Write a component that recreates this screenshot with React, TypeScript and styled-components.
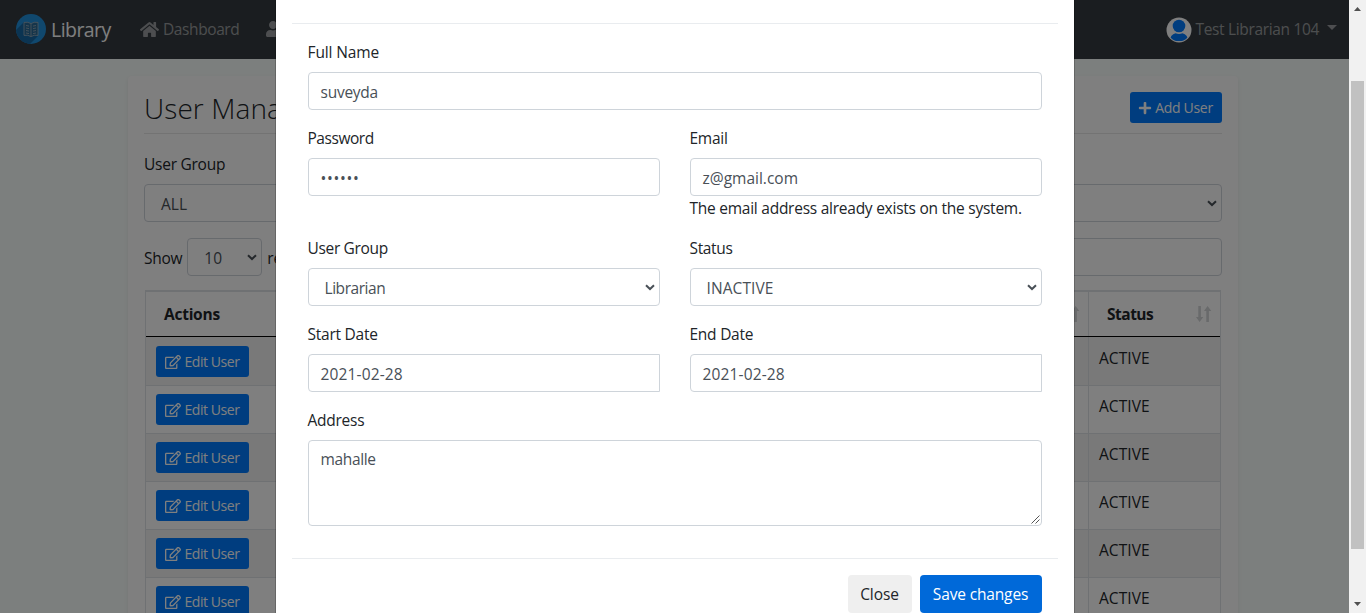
import React from "react";
import styled, { createGlobalStyle } from "styled-components";
import { FaHome, FaUser, FaPlus, FaRegEdit } from "react-icons/fa";

const GlobalStyle = createGlobalStyle`
  *, *::before, *::after { box-sizing: border-box; }
  html, body { margin: 0; height: 100%; overflow: hidden; }
  body {
    font-family: "Open Sans", "Noto Sans", sans-serif;
    font-size: 15.5px;
    font-weight: 400;
    line-height: 24px;
    color: #212529;
    background: #f9fefc;
  }
`;

const Window = styled.div`
  display: flex;
  height: 613px;
  width: 1366px;
  overflow: hidden;
`;

const Page = styled.div`
  flex: 1;
  min-width: 0;
  height: 613px;
  overflow: hidden;
  background: #f9fefc;
`;

const Text = styled.span<{ $track?: number }>`
  letter-spacing: ${(p) => p.$track ?? -0.25}px;
  white-space: nowrap;
`;

/* Navigation bar */

const Navbar = styled.nav`
  display: flex;
  align-items: center;
  height: 59px;
  padding: 0 12px 1px 16px;
  background: #343a40;
  color: rgba(255, 255, 255, 0.5);
`;

const Brand = styled.div`
  display: flex;
  align-items: center;
  width: 124px;
  color: #fff;
  font-size: 19.5px;

  svg { margin-right: 5px; }
  span { padding-top: 1px; }
`;

const NavItem = styled.div<{ $gap?: number; $width?: number }>`
  display: flex;
  align-items: center;
  gap: ${(p) => p.$gap ?? 4}px;
  width: ${(p) => (p.$width ? `${p.$width}px` : "auto")};

  span { margin-top: -1px; }
`;

const NavSpacer = styled.div`
  flex: 1;
`;

const Caret = styled.i`
  margin: -3px 0 0 4px;
  border-top: 5px solid currentColor;
  border-left: 5px solid transparent;
  border-right: 5px solid transparent;
`;

/* Card with the user list */

const Card = styled.section`
  width: 1110px;
  height: 700px;
  margin: 17px 0 0 128px;
  padding: 0 16px;
  border-radius: 4px;
  background: #fff;
  box-shadow: 0 2px 4px rgba(0, 0, 0, 0.075);
`;

const CardHeader = styled.header`
  display: flex;
  justify-content: space-between;
  height: 58px;
  padding-top: 16px;
  border-bottom: 1px solid #e6e6e6;
`;

const Title = styled.h3`
  margin: -1px 0 0;
  font-size: 28px;
  font-weight: 300;
  line-height: 34px;
  letter-spacing: 0.1px;
  white-space: nowrap;
`;

const SmallButton = styled.button<{ $width: number; $gap: number }>`
  display: flex;
  align-items: center;
  justify-content: center;
  gap: ${(p) => p.$gap}px;
  width: ${(p) => p.$width}px;
  height: 31px;
  padding: 0 1px 0 0;
  border: 0;
  border-radius: 3px;
  background: #007bff;
  color: #fff;
  font: inherit;
  font-size: 14px;
  line-height: 21px;
`;

const Filter = styled.div`
  padding-top: 18px;
`;

const Field = styled.div<{ $square?: boolean; $indent?: number; $width?: number }>`
  display: flex;
  flex-shrink: 0;
  align-items: center;
  justify-content: space-between;
  width: ${(p) => (p.$width ? `${p.$width}px` : "100%")};
  height: 38px;
  padding: 2px 4px 0 ${(p) => p.$indent ?? 12}px;
  border: 1px solid #ced4da;
  border-radius: ${(p) => (p.$square ? "4px 0 0 4px" : "4px")};
  background: #fff;
  color: #495057;
`;

const Label = styled.div`
  height: 24px;
  margin-bottom: 8px;
`;

const TableControls = styled.div`
  display: flex;
  align-items: center;
  gap: 5px;
  margin: 16px 0 14px;

  > span { padding-top: 1px; }
`;

const SearchSlot = styled.div`
  flex: 1;
  padding-left: 500px;
`;

const Table = styled.div`
  width: 1076px;
  margin-left: 1px;
  border: 1px solid #dee2e6;
  border-bottom: 0;
`;

const HeadRow = styled.div`
  display: grid;
  grid-template-columns: 190px 1fr 132px;
  height: 46px;
  border-top: 1px solid #dee2e6;
  border-bottom: 1px solid #000;
  font-weight: 700;
`;

const HeadCell = styled.div`
  display: flex;
  align-items: center;
  justify-content: space-between;
  padding: 0 7px 0 18px;
  border-left: 1px solid #dee2e6;
  &:first-child { border-left: 0; }
`;

const Cell = styled.div`
  padding: 8px 10px;
  border-left: 1px solid #dee2e6;
  &:first-child { border-left: 0; }
`;

const Row = styled.div<{ $first?: boolean; $striped?: boolean }>`
  display: grid;
  grid-template-columns: 190px 1fr 132px;
  height: ${(p) => (p.$first ? 49 : 48)}px;
  border-bottom: 1px solid #dee2e6;
  background: ${(p) => (p.$striped ? "#f2f2f2" : "#fff")};

  ${Cell} { padding-top: ${(p) => (p.$first ? 9 : 8)}px; }
`;

/* Modal */

const Backdrop = styled.div`
  position: fixed;
  top: 0;
  left: 0;
  width: 1349px;
  height: 613px;
  display: flex;
  justify-content: center;
  overflow: hidden;
  background: rgba(0, 0, 0, 0.5);
`;

const Dialog = styled.div`
  width: 800px;
  height: 660px;
  flex-shrink: 0;
  padding: 23px 16px 0;
  border: 1px solid rgba(0, 0, 0, 0.2);
  border-width: 0 1px;
  background: #fff;
  background-clip: padding-box;
`;

const DialogBody = styled.div`
  display: flex;
  flex-direction: column;
  gap: 16px;
  height: 536px;
  padding: 16px 16px 0;
  border-top: 1px solid #e9ecef;
  border-bottom: 1px solid #e9ecef;
`;

const Columns = styled.div`
  display: grid;
  grid-template-columns: 352px 352px;
  gap: 30px;
`;

const Hint = styled.div`
  height: 24px;
`;

const TextArea = styled.div`
  display: flex;
  justify-content: space-between;
  height: 86px;
  padding: 6px 1px 1px 12px;
  border: 1px solid #ced4da;
  border-radius: 4px;
  color: #495057;

  svg { align-self: flex-end; }
`;

const DialogFooter = styled.footer`
  display: flex;
  justify-content: flex-end;
  gap: 8px;
  padding: 16px 16px 0;
`;

const Button = styled.button<{ $primary?: boolean; $width: number }>`
  width: ${(p) => p.$width}px;
  height: 38px;
  padding: 0;
  border: 0;
  border-radius: 4px;
  background: ${(p) => (p.$primary ? "#0069d9" : "#efefef")};
  color: ${(p) => (p.$primary ? "#fff" : "#212529")};
  font: inherit;
`;

/* Window scrollbar */

const Scrollbar = styled.div`
  display: flex;
  flex-direction: column;
  align-items: center;
  width: 17px;
  height: 613px;
  background: #f1f1f1;
`;

const ScrollArrow = styled.svg`
  display: block;
  width: 17px;
  height: 17px;
  fill: #505050;
`;

const ScrollThumb = styled.div`
  width: 13px;
  height: 468px;
  margin: 64px 0 auto;
  background: #c1c1c1;
`;

const LogoIcon = () => (
  <svg width="30" height="30" viewBox="0 0 30 30">
    <defs>
      <clipPath id="disc"><circle cx="15" cy="15" r="15" /></clipPath>
    </defs>
    <g clipPath="url(#disc)">
      <path d="M0 0h30v30H0z" fill="#2190dc" />
      <path d="M8 8 0 16v14h14l8-8z" fill="#1668a4" />
    </g>
    <path d="M8 8.4q4-.8 7 1.2 3-2 7-1.2v13q-4-.8-7 1.2-3-2-7-1.2z" fill="#2a6a96" stroke="#9fb0ba" strokeWidth=".8" />
    <path d="M15 9.6v12.8M10 11.5l3 .6M10 14l3 .6M10 16.500l3 .6M10 19l3 .6M20 11.500l-3 .6M20 14l-3 .6M20 16.500l-3 .6M20 19l-3 .6" stroke="#9fb0ba" strokeWidth=".8" fill="none" />
  </svg>
);

const AvatarSvg = styled.svg`
  margin: 2px 0 0;
`;

const AvatarIcon = () => (
  <AvatarSvg width="26" height="26" viewBox="0 0 26 26">
    <defs>
      <clipPath id="face"><circle cx="13" cy="13" r="11.400" /></clipPath>
    </defs>
    <circle cx="13" cy="13" r="12.500" fill="#fff" />
    <g clipPath="url(#face)" fill="#007bff">
      <circle cx="13" cy="9" r="6.300" />
      <path d="M3.500 24q1-6.500 6-7.700 3.500 1.400 7 0 5 1.200 6 7.700z" />
    </g>
  </AvatarSvg>
);

const ChevronSvg = styled.svg`
  margin-top: -1px;
`;

const Chevron = () => (
  <ChevronSvg width="10" height="7" viewBox="0 0 10 7">
    <path d="M1 1.200 5 5l4-3.800" fill="none" stroke="currentColor" strokeWidth="2" />
  </ChevronSvg>
);

const SortIcon = () => (
  <svg width="18" height="18" viewBox="0 0 18 18" fill="#d2d4d6">
    <path d="M3.300 1h2.600v11H8.300L4.600 17 1 12h2.300z" />
    <path d="M11.300 17h2.600V6h2.400L12.600 1 9 6h2.300z" />
  </svg>
);

const Grip = () => (
  <svg width="9" height="9" viewBox="0 0 9 9">
    <path d="M.5 8.500l8-8M4.500 8.500l4-4" stroke="#555" strokeWidth="1" fill="none" />
  </svg>
);

type FieldProps = {
  label: string;
  value: string;
  labelTrack?: number;
  track?: number;
  select?: boolean;
  square?: boolean;
};

const FormField = ({ label, value, labelTrack, track, select, square }: FieldProps) => (
  <div>
    <Label><Text $track={labelTrack}>{label}</Text></Label>
    <Field $square={square} $indent={select ? 16 : 12}>
      <Text $track={track}>{value}</Text>
      {select && <Chevron />}
    </Field>
  </div>
);

const rows = [0, 1, 2, 3, 4, 5];

export default function App() {
  return (
    <>
      <GlobalStyle />
      <Window>
        <Page>
          <Navbar>
            <Brand><LogoIcon /><Text $track={-0.55}>Library</Text></Brand>
            <NavItem $width={125}><FaHome size={19} /><Text $track={-0.4}>Dashboard</Text></NavItem>
            <NavItem><FaUser size={16} /><Text>Users</Text></NavItem>
            <NavSpacer />
            <NavItem><AvatarIcon /><Text $track={-0.34}>Test Librarian 104</Text><Caret /></NavItem>
          </Navbar>
          <Card>
            <CardHeader>
              <Title>User Management</Title>
              <SmallButton $width={92} $gap={3}><FaPlus size={14} /><Text $track={-0.3}>Add User</Text></SmallButton>
            </CardHeader>
            <Filter>
              <FormField label="User Group" value="ALL" track={0} select />
            </Filter>
            <TableControls>
              <Text>Show</Text>
              <Field $width={75} $indent={16}><Text $track={0}>10</Text><Chevron /></Field>
              <Text>records</Text>
              <SearchSlot><Field /></SearchSlot>
            </TableControls>
            <Table>
              <HeadRow>
                <HeadCell><Text>Actions</Text></HeadCell>
                <HeadCell><span /><SortIcon /></HeadCell>
                <HeadCell><Text $track={-0.5}>Status</Text><SortIcon /></HeadCell>
              </HeadRow>
              {rows.map((i) => (
                <Row key={i} $first={i === 0} $striped={i % 2 === 0}>
                  <Cell>
                    <SmallButton $width={93} $gap={4}><FaRegEdit size={16} /><Text $track={-0.45}>Edit User</Text></SmallButton>
                  </Cell>
                  <Cell />
                  <Cell><Text $track={0.05}>ACTIVE</Text></Cell>
                </Row>
              ))}
            </Table>
          </Card>
        </Page>
        <Scrollbar>
          <ScrollArrow viewBox="0 0 17 17"><path d="M5 11h7L8.500 7z" /></ScrollArrow>
          <ScrollThumb />
          <ScrollArrow viewBox="0 0 17 17"><path d="M5 6h7l-3.500 4z" /></ScrollArrow>
        </Scrollbar>
      </Window>
      <Backdrop>
        <Dialog>
          <DialogBody>
            <FormField label="Full Name" labelTrack={-0.12} value="suveyda" track={-0.25} />
            <Columns>
              <FormField label="Password" labelTrack={-0.45} value="••••••" track={0.65} />
              <div>
                <FormField label="Email" value="z@gmail.com" track={0} />
                <Hint><Text>The email address already exists on the system.</Text></Hint>
              </div>
            </Columns>
            <Columns>
              <FormField label="User Group" labelTrack={-0.33} value="Librarian" track={-0.45} select />
              <FormField label="Status" labelTrack={-0.35} value="INACTIVE" track={0.1} select />
            </Columns>
            <Columns>
              <FormField label="Start Date" value="2021-02-28" track={0.15} square />
              <FormField label="End Date" value="2021-02-28" track={0.15} square />
            </Columns>
            <div>
              <Label><Text>Address</Text></Label>
              <TextArea><Text $track={-0.35}>mahalle</Text><Grip /></TextArea>
            </div>
          </DialogBody>
          <DialogFooter>
            <Button $width={64}><Text $track={-0.1}>Close</Text></Button>
            <Button $primary $width={122}><Text $track={-0.15}>Save changes</Text></Button>
          </DialogFooter>
        </Dialog>
      </Backdrop>
    </>
  );
}
